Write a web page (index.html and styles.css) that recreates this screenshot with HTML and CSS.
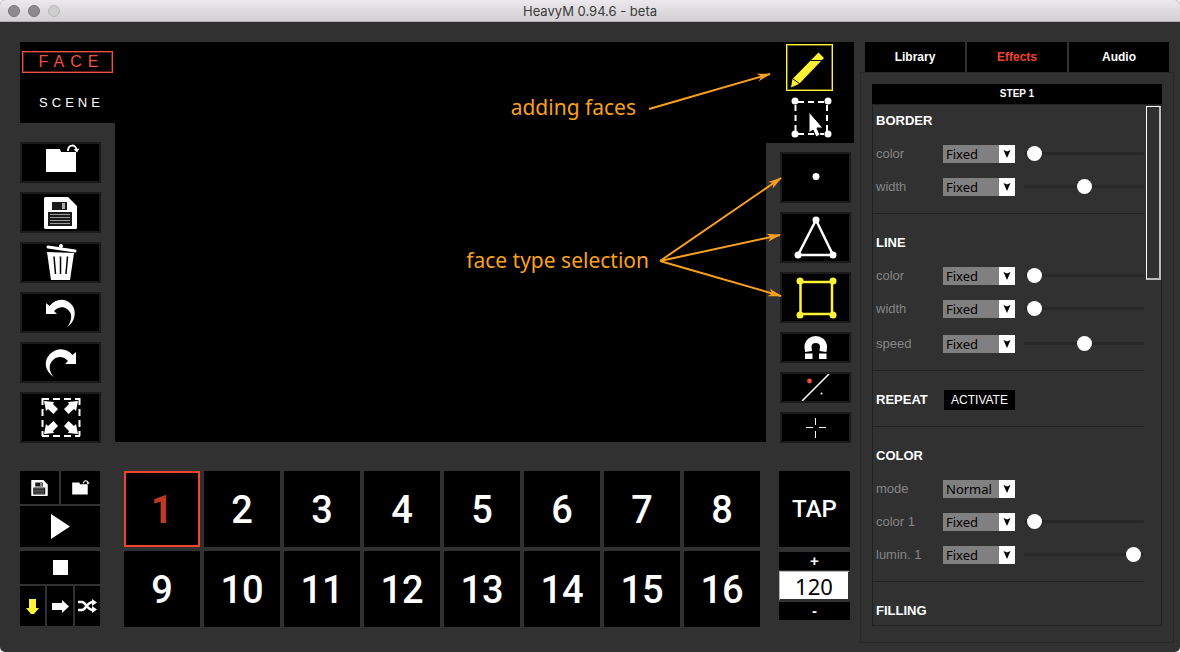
FILE: index.html
```html
<!DOCTYPE html>
<html lang="en">
<head>
<meta charset="utf-8">
<title>HeavyM 0.94.6 - beta</title>
<link rel="stylesheet" href="styles.css">
</head>
<body>
<svg class="defs" width="0" height="0" aria-hidden="true">
  <defs>
    <g id="folder">
      <path fill="#fff" d="M24 5H38L39 8H54V28H24Z"/>
      <path fill="none" stroke="#fff" stroke-width="2" d="M46 7C46 0 54 0 54.500 6"/>
      <path fill="#fff" d="M51.500 5.500L57.500 4.500L55 8.500Z"/>
    </g>
    <g id="floppy">
      <path fill="#fff" d="M23 3H46L55 12V34L54 35H23L22 34V4Z"/>
      <path fill="#1a1a1a" d="M30 8H45V16H30ZM26 18H50V32H26Z"/>
      <path fill="#aaa" d="M40 9H43V15H40Z"/>
      <path stroke="#999" stroke-width="1" d="M28 20.500H48M28 23.500H48M28 26.500H48M28 29.500H48"/>
    </g>
    <path id="corner-arrow" fill="#fff" d="M22 7L32 8L31 10L36 15L31.500 20L26 15L24 17Z"/>
    <marker id="head" markerUnits="userSpaceOnUse" markerWidth="16" markerHeight="12" refX="13" refY="5" orient="auto">
      <path fill="#f9a01f" d="M0 1L14 5L0 9L4 5Z"/>
    </marker>
  </defs>
</svg>
<div class="window">
  <header class="titlebar">
    <div class="lights"><span class="light"></span><span class="light"></span><span class="light light-off"></span></div>
    <h1 class="title">HeavyM 0.94.6 - beta</h1>
  </header>
  <div class="body">
    <main class="workspace">
      <div class="stage">
        <div class="side">
          <div class="modes">
            <button class="mode mode-active" type="button">FACE</button>
            <button class="mode" type="button">SCENE</button>
          </div>
          <div class="actions">
            <button class="tile" type="button" aria-label="Open"><svg viewBox="0 0 77 37"><use href="#folder"/></svg></button>
            <button class="tile" type="button" aria-label="Save"><svg viewBox="0 0 77 37"><use href="#floppy"/></svg></button>
            <button class="tile" type="button" aria-label="Delete"><svg viewBox="0 0 77 37"><path d="M26 3L53 7" stroke="#fff" stroke-width="3" stroke-linecap="round"/><circle cx="39" cy="2" r="2" fill="#fff"/><path fill="#fff" d="M25 8L52 9L48 36H29Z"/><path stroke="#000" stroke-width="1.500" d="M32 12.500L33.500 30M38.500 12.500V30M45.500 12.500L44 30"/></svg></button>
            <button class="tile" type="button" aria-label="Undo"><svg viewBox="0 0 77 37"><path fill="#fff" d="M24 9V20H35L32 17C36 13 41 12 45 15C51 19 50 26 45.500 33C53 28 55 17 50 11C44 4 34 4 27.500 12Z"/></svg></button>
            <button class="tile" type="button" aria-label="Redo"><svg viewBox="0 0 77 37"><path fill="#fff" d="M54 8V20H43L46 17C42 12 35 12 31 16C26 21 27 27 31.500 33C23 27 21 17 28 10C35 3 45 4 50.500 11Z"/></svg></button>
            <button class="tile tile-tall" type="button" aria-label="Fit"><svg viewBox="0 0 77 47"><path fill="none" stroke="#fff" stroke-width="2" stroke-dasharray="7 4" d="M20 5H58M20 42H58M20.500 4V42M57.500 4V42"/><use href="#corner-arrow"/><use href="#corner-arrow" transform="matrix(-1 0 0 1 78 0)"/><use href="#corner-arrow" transform="matrix(1 0 0 -1 0 47)"/><use href="#corner-arrow" transform="matrix(-1 0 0 -1 78 47)"/></svg></button>
          </div>
        </div>
        <div class="canvas">
          <p class="note note-faces">adding faces</p>
          <p class="note note-types">face type selection</p>
          <svg class="arrows" viewBox="0 0 146 280"><g fill="none" stroke="#f9a01f" stroke-width="2"><path marker-end="url(#head)" d="M9 67L130 32"/><path marker-end="url(#head)" d="M20 219L141 136"/><path marker-end="url(#head)" d="M20 219L140 193"/><path marker-end="url(#head)" d="M20 219L141 254"/></g></svg>
        </div>
        <div class="tools">
          <div class="pointer-tools">
            <button class="pointer-tool pointer-active" type="button" aria-label="Draw"><svg viewBox="1 1 45 45"><path fill="#fff335" d="M5 43.500L6.500 35L32.500 8.500L38 14L13 40Z"/><path stroke="#000" d="M25 16.500H36M7 35L14 40" fill="none"/></svg></button>
            <button class="pointer-tool" type="button" aria-label="Select"><svg viewBox="0 0 47 48"><path fill="none" stroke="#fff" stroke-width="2" stroke-dasharray="6 4" d="M12 10H41M12 42H41M9.500 13V41M41 13V41"/><g fill="#fff"><circle cx="9" cy="9" r="3.500"/><circle cx="42" cy="9" r="3.500"/><circle cx="9" cy="42" r="3.500"/><circle cx="42" cy="42" r="3.500"/></g><path fill="#fff" stroke="#000" d="M23 20V41L27 38L30 45L34 43L31 36H37Z"/></svg></button>
          </div>
          <div class="shapes">
            <button class="tile tile-tall" type="button" aria-label="Point"><svg viewBox="0 0 67 47"><circle cx="34" cy="22.500" r="3.500" fill="#fff"/></svg></button>
            <button class="tile tile-tall" type="button" aria-label="Triangle"><svg viewBox="0 0 67 47"><path fill="none" stroke="#fff" stroke-width="2.500" d="M34 6L16 41H51Z"/><g fill="#fff"><circle cx="34" cy="6" r="3.500"/><circle cx="16" cy="41" r="3.500"/><circle cx="51" cy="41" r="3.500"/></g></svg></button>
            <button class="tile tile-tall" type="button" aria-label="Quad"><svg viewBox="0 0 67 47"><path fill="none" stroke="#fff335" stroke-width="2.500" d="M18.500 8H50V40H18.500Z"/><g fill="#fff335"><circle cx="18" cy="7" r="3.500"/><circle cx="51" cy="7" r="3.500"/><circle cx="18" cy="41" r="3.500"/><circle cx="51" cy="41" r="3.500"/></g></svg></button>
            <button class="tile tile-low" type="button" aria-label="Magnet"><svg viewBox="0 0 67 27"><path fill="none" stroke="#fff" stroke-width="7" d="M26.500 17.500L26 13C26 3 41.500 3 41.500 13L41 17.500"/><path fill="#fff" d="M23 19.500H30.500V25H23ZM37 19.500H44.500V25H37Z"/></svg></button>
            <button class="tile tile-low" type="button" aria-label="Split"><svg viewBox="0 0 67 27"><path stroke="#fff" stroke-width="1.500" d="M20 27L47 0"/><circle cx="27.500" cy="7" r="2.400" fill="#f0503c"/><circle cx="39.500" cy="19.500" r="1" fill="#fff"/></svg></button>
            <button class="tile tile-low" type="button" aria-label="Center"><svg viewBox="0 0 67 27"><path stroke="#fff" d="M24 13.500H31M37 13.500H44M33.500 4V11M33.500 17V24"/></svg></button>
          </div>
        </div>
      </div>
      <div class="player">
        <div class="transport">
          <div class="transport-group">
            <div class="transport-row"><button class="key" type="button" aria-label="Save sequence"><svg width="17" height="16" viewBox="22 3 33 32"><use href="#floppy"/></svg></button><button class="key" type="button" aria-label="Open sequence"><svg width="18" height="15" viewBox="24 0 34 29"><use href="#folder"/></svg></button></div>
            <button class="key key-play" type="button" aria-label="Play"><svg width="19" height="25" viewBox="0 0 19 25"><path fill="#fff" d="M0 0L19 12.500L0 25Z"/></svg></button>
          </div>
          <div class="transport-group">
            <button class="key" type="button" aria-label="Stop"><svg width="15" height="15" viewBox="0 0 15 15"><path fill="#fff" d="M0 0H15V15H0Z"/></svg></button>
            <div class="transport-row transport-order"><button class="key" type="button" aria-label="Down"><svg width="13" height="15" viewBox="0 0 13 15"><path fill="#fff335" d="M3 0H10V9H13L8 15H5L0 9H3Z"/></svg></button><button class="key" type="button" aria-label="Forward"><svg width="17" height="13" viewBox="0 0 17 13"><path fill="#fff" d="M0 3H10V0L17 6.500L10 13V10H0Z"/></svg></button><button class="key" type="button" aria-label="Shuffle"><svg width="19" height="14" viewBox="0 0 19 14"><path fill="none" stroke="#fff" stroke-width="2.500" d="M0 3H4C8 3 9 11 15 11M0 11H4C8 11 9 3 15 3"/><path fill="#fff" d="M14 0L19 3.500L14 7ZM14 7L19 10.500L14 14Z"/></svg></button></div>
          </div>
        </div>
        <div class="pads">
          <button class="pad pad-active" type="button">1</button><button class="pad" type="button">2</button><button class="pad" type="button">3</button><button class="pad" type="button">4</button><button class="pad" type="button">5</button><button class="pad" type="button">6</button><button class="pad" type="button">7</button><button class="pad" type="button">8</button>
          <button class="pad" type="button">9</button><button class="pad" type="button">10</button><button class="pad" type="button">11</button><button class="pad" type="button">12</button><button class="pad" type="button">13</button><button class="pad" type="button">14</button><button class="pad" type="button">15</button><button class="pad" type="button">16</button>
        </div>
        <div class="tempo">
          <button class="pad tap" type="button">TAP</button>
          <button class="step" type="button">+</button>
          <input class="bpm" type="text" value="120" aria-label="Beats per minute">
          <button class="step" type="button">-</button>
        </div>
      </div>
    </main>
    <aside class="inspector">
      <nav class="tabs">
        <button class="tab" type="button">Library</button>
        <button class="tab tab-active" type="button">Effects</button>
        <button class="tab" type="button">Audio</button>
      </nav>
      <div class="panel">
        <h2 class="step-title">STEP 1</h2>
        <div class="effects">
          <div class="list">
            <section class="group">
              <h3 class="name">BORDER</h3>
              <div class="row"><label class="label" for="bc">color</label><span class="pick"><select id="bc"><option>Fixed</option></select><svg class="caret" viewBox="0 0 16 18"><path d="M4.500 5L8 6.500L11.500 5L8 13Z"/></svg></span><input class="range" type="range" min="0" max="100" value="3" aria-label="Border color"></div>
              <div class="row"><label class="label" for="bw">width</label><span class="pick"><select id="bw"><option>Fixed</option></select><svg class="caret" viewBox="0 0 16 18"><path d="M4.500 5L8 6.500L11.500 5L8 13Z"/></svg></span><input class="range" type="range" min="0" max="100" value="50" aria-label="Border width"></div>
            </section>
            <section class="group">
              <h3 class="name">LINE</h3>
              <div class="row"><label class="label" for="lc">color</label><span class="pick"><select id="lc"><option>Fixed</option></select><svg class="caret" viewBox="0 0 16 18"><path d="M4.500 5L8 6.500L11.500 5L8 13Z"/></svg></span><input class="range" type="range" min="0" max="100" value="3" aria-label="Line color"></div>
              <div class="row"><label class="label" for="lw">width</label><span class="pick"><select id="lw"><option>Fixed</option></select><svg class="caret" viewBox="0 0 16 18"><path d="M4.500 5L8 6.500L11.500 5L8 13Z"/></svg></span><input class="range" type="range" min="0" max="100" value="3" aria-label="Line width"></div>
              <div class="row row-speed"><label class="label" for="ls">speed</label><span class="pick"><select id="ls"><option>Fixed</option></select><svg class="caret" viewBox="0 0 16 18"><path d="M4.500 5L8 6.500L11.500 5L8 13Z"/></svg></span><input class="range" type="range" min="0" max="100" value="50" aria-label="Line speed"></div>
            </section>
            <section class="group">
              <div class="row"><h3 class="name">REPEAT</h3><button class="activate" type="button">ACTIVATE</button></div>
            </section>
            <section class="group">
              <h3 class="name">COLOR</h3>
              <div class="row"><label class="label" for="cm">mode</label><span class="pick"><select id="cm"><option>Normal</option></select><svg class="caret" viewBox="0 0 16 18"><path d="M4.500 5L8 6.500L11.500 5L8 13Z"/></svg></span></div>
              <div class="row"><label class="label" for="c1">color 1</label><span class="pick"><select id="c1"><option>Fixed</option></select><svg class="caret" viewBox="0 0 16 18"><path d="M4.500 5L8 6.500L11.500 5L8 13Z"/></svg></span><input class="range" type="range" min="0" max="100" value="3" aria-label="Color 1"></div>
              <div class="row"><label class="label" for="l1">lumin. 1</label><span class="pick"><select id="l1"><option>Fixed</option></select><svg class="caret" viewBox="0 0 16 18"><path d="M4.500 5L8 6.500L11.500 5L8 13Z"/></svg></span><input class="range" type="range" min="0" max="100" value="97" aria-label="Luminosity 1"></div>
            </section>
            <section class="group">
              <h3 class="name">FILLING</h3>
            </section>
          </div>
          <div class="scrollbar"><div class="thumb"></div></div>
        </div>
      </div>
    </aside>
  </div>
</div>
</body>
</html>
```
FILE: styles.css
```css
* { box-sizing: border-box; }
body {
  margin: 0;
  background: #fff;
  color: #fff;
  font-family: "Liberation Sans", Arial, sans-serif;
}
button, input, select {
  margin: 0;
  padding: 0;
  border: 0;
  border-radius: 0;
  font: inherit;
  color: inherit;
}
h1, h2, h3, p { margin: 0; }
svg { display: block; }
.defs { position: absolute; }

.window {
  display: flex;
  flex-direction: column;
  height: 100vh;
  background: #313131;
  border-radius: 5px;
  overflow: hidden;
}
.titlebar {
  display: grid;
  grid-template-columns: 1fr auto 1fr;
  align-items: center;
  flex: 0 0 22px;
  padding: 0 8px;
  background: linear-gradient(#ebe9eb, #d2d0d2);
  border-bottom: 1px solid #b1afb1;
}
.lights { display: flex; gap: 8px; }
.light {
  width: 12px;
  height: 12px;
  border-radius: 50%;
  background: #8c8b90;
  border: 1px solid #77767a;
}
.light-off { background: #cdcdcd; border-color: #b9b9b9; }
.title {
  font: 400 13px/20px Inter, sans-serif;
  color: #3a3a3a;
}

.body {
  display: grid;
  grid-template-columns: minmax(0, 1fr) 314px;
  flex: 1;
  min-height: 0;
  padding: 20px 6px 9px 20px;
}

/* Stage */
.workspace {
  display: flex;
  flex-direction: column;
  gap: 28px;
}
.stage { display: flex; padding-right: 6px; }
.side { flex: 0 0 95px; }
.modes {
  display: flex;
  flex-direction: column;
  gap: 18px;
  height: 81px;
  padding: 9px 2px;
  background: #000;
}
.mode {
  height: 22px;
  padding-left: 8px;
  background: none;
  font-size: 13px;
  letter-spacing: 4px;
}
.mode-active {
  border: 1px solid #f0523d;
  box-shadow: inset 0 0 0 1px #5e2018;
  color: #f0523d;
  font-size: 16px;
  letter-spacing: 6px;
}
.actions, .shapes {
  display: flex;
  flex-direction: column;
  gap: 9px;
}
.actions { width: 81px; margin-top: 19px; }
.tile {
  height: 41px;
  background: #000;
  border: 2px solid #1b1b1b;
}
.tile-tall { height: 51px; }
.tile-low { height: 31px; }
.tile svg { width: 100%; height: 100%; }

.canvas {
  position: relative;
  flex: 1;
  height: 400px;
  background: #000;
}
.note {
  position: absolute;
  color: #f9a01f;
  font: 21px/24px "Noto Sans", sans-serif;
  white-space: nowrap;
}
.note-faces { top: 53px; right: 130px; }
.note-types { top: 206px; right: 117px; }
.arrows {
  position: absolute;
  z-index: 1;
  top: 0;
  right: -20px;
  width: 146px;
  height: 280px;
  pointer-events: none;
}

.tools { flex: 0 0 88px; }
.pointer-tools {
  display: flex;
  flex-direction: column;
  gap: 1px;
  height: 101px;
  padding: 2px 20px 0;
  background: #000;
}
.pointer-tool { width: 47px; height: 48px; background: #000; }
.pointer-active {
  height: 47px;
  border: 1px solid #fff335;
  box-shadow: inset 0 0 0 1px #6b661c;
}
.shapes { width: 71px; margin: 9px 0 0 14px; }

/* Player */
.player { display: flex; padding-right: 10px; }
.transport {
  display: flex;
  flex-direction: column;
  flex: 0 0 80px;
  gap: 4px;
  margin-right: 24px;
}
.transport-group { display: flex; flex-direction: column; gap: 2px; }
.transport-row { display: grid; grid-template-columns: 1fr 1fr; gap: 2px; }
.transport-order { grid-template-columns: 25px 1fr 25px; }
.key {
  display: flex;
  align-items: center;
  justify-content: center;
  height: 33px;
  background: #000;
}
.key-play { height: 41px; }
.transport-order .key { height: 40px; }
.pads {
  display: grid;
  grid-template-columns: repeat(8, 1fr);
  gap: 4px;
  flex: 1;
}
.pad {
  height: 76px;
  padding-top: 2px;
  background: #000;
  font: 500 38px/44px Roboto, sans-serif;
}
.pad-active {
  border: 2px solid #f0442e;
  color: #c03a25;
  font-weight: 700;
}
.tempo {
  display: flex;
  flex-direction: column;
  flex: 0 0 71px;
  gap: 1px;
  margin-left: 19px;
}
.tap { margin-bottom: 4px; padding: 0; font-size: 24px; }
.step {
  height: 18px;
  background: #000;
  font: 700 15px/18px "Liberation Sans", sans-serif;
}
.bpm {
  width: 100%;
  height: 30px;
  background: #fff;
  border: 1px solid #b5b5b5;
  border-width: 1px 2px 2px 1px;
  border-color: #b5b5b5 #313131 #313131 #b5b5b5;
  color: #000;
  font: 22px/26px "Noto Sans", sans-serif;
  text-align: center;
}

/* Inspector */
.inspector { display: flex; flex-direction: column; min-height: 0; }
.tabs {
  display: grid;
  grid-template-columns: repeat(3, 1fr);
  gap: 2px;
  padding: 0 5px;
}
.tab {
  height: 30px;
  background: #000;
  font-size: 12px;
  font-weight: 700;
}
.tab-active { color: #f0442e; }
.panel {
  display: flex;
  flex-direction: column;
  flex: 1;
  min-height: 0;
  padding: 11px 11px 16px;
  border: 1px solid #292929;
}
.step-title {
  flex: none;
  background: #000;
  font-size: 10px;
  line-height: 20px;
  text-align: center;
}
.effects {
  display: flex;
  flex: 1;
  min-height: 0;
  gap: 2px;
  border: 1px solid #212121;
  overflow: hidden;
}
.list { flex: 1; }
.group {
  padding: 12px 0 10px;
  border-bottom: 1px solid #212121;
}
.group:first-child { padding-top: 0; }
.name {
  height: 33px;
  padding-left: 3px;
  font-size: 13px;
  line-height: 34px;
}
.group:first-child .name { height: 32px; line-height: 32px; }
.row {
  display: grid;
  grid-template-columns: 70px 72px 1fr;
  align-items: center;
  height: 33px;
}
.row-speed { margin-top: 2px; }
.label {
  padding-left: 3px;
  color: #858585;
  font-size: 13px;
  line-height: 16px;
}
.pick { display: flex; height: 18px; }
.pick select {
  appearance: none;
  flex: 1;
  min-width: 0;
  padding-left: 3px;
  background: #808080;
  color: #000;
  font: 13px/18px "Noto Sans", sans-serif;
}
.caret { flex: 0 0 16px; height: 18px; background: #fff; }
.range {
  appearance: none;
  min-width: 0;
  height: 16px;
  margin-left: 9px;
  background: none;
}
.range::-webkit-slider-runnable-track {
  height: 3px;
  border-radius: 2px;
  background: #272727;
}
.range::-webkit-slider-thumb {
  appearance: none;
  width: 15px;
  height: 15px;
  margin-top: -6px;
  border-radius: 50%;
  background: #fff;
}
.activate {
  height: 20px;
  margin-left: 1px;
  background: #000;
  font-size: 12px;
}
.scrollbar { flex: 0 0 15px; padding-top: 1px; }
.thumb {
  height: 174px;
  border: 1px solid #fff;
  border-right: 2px solid #bbb;
  border-bottom: 2px solid #bbb;
}
```
